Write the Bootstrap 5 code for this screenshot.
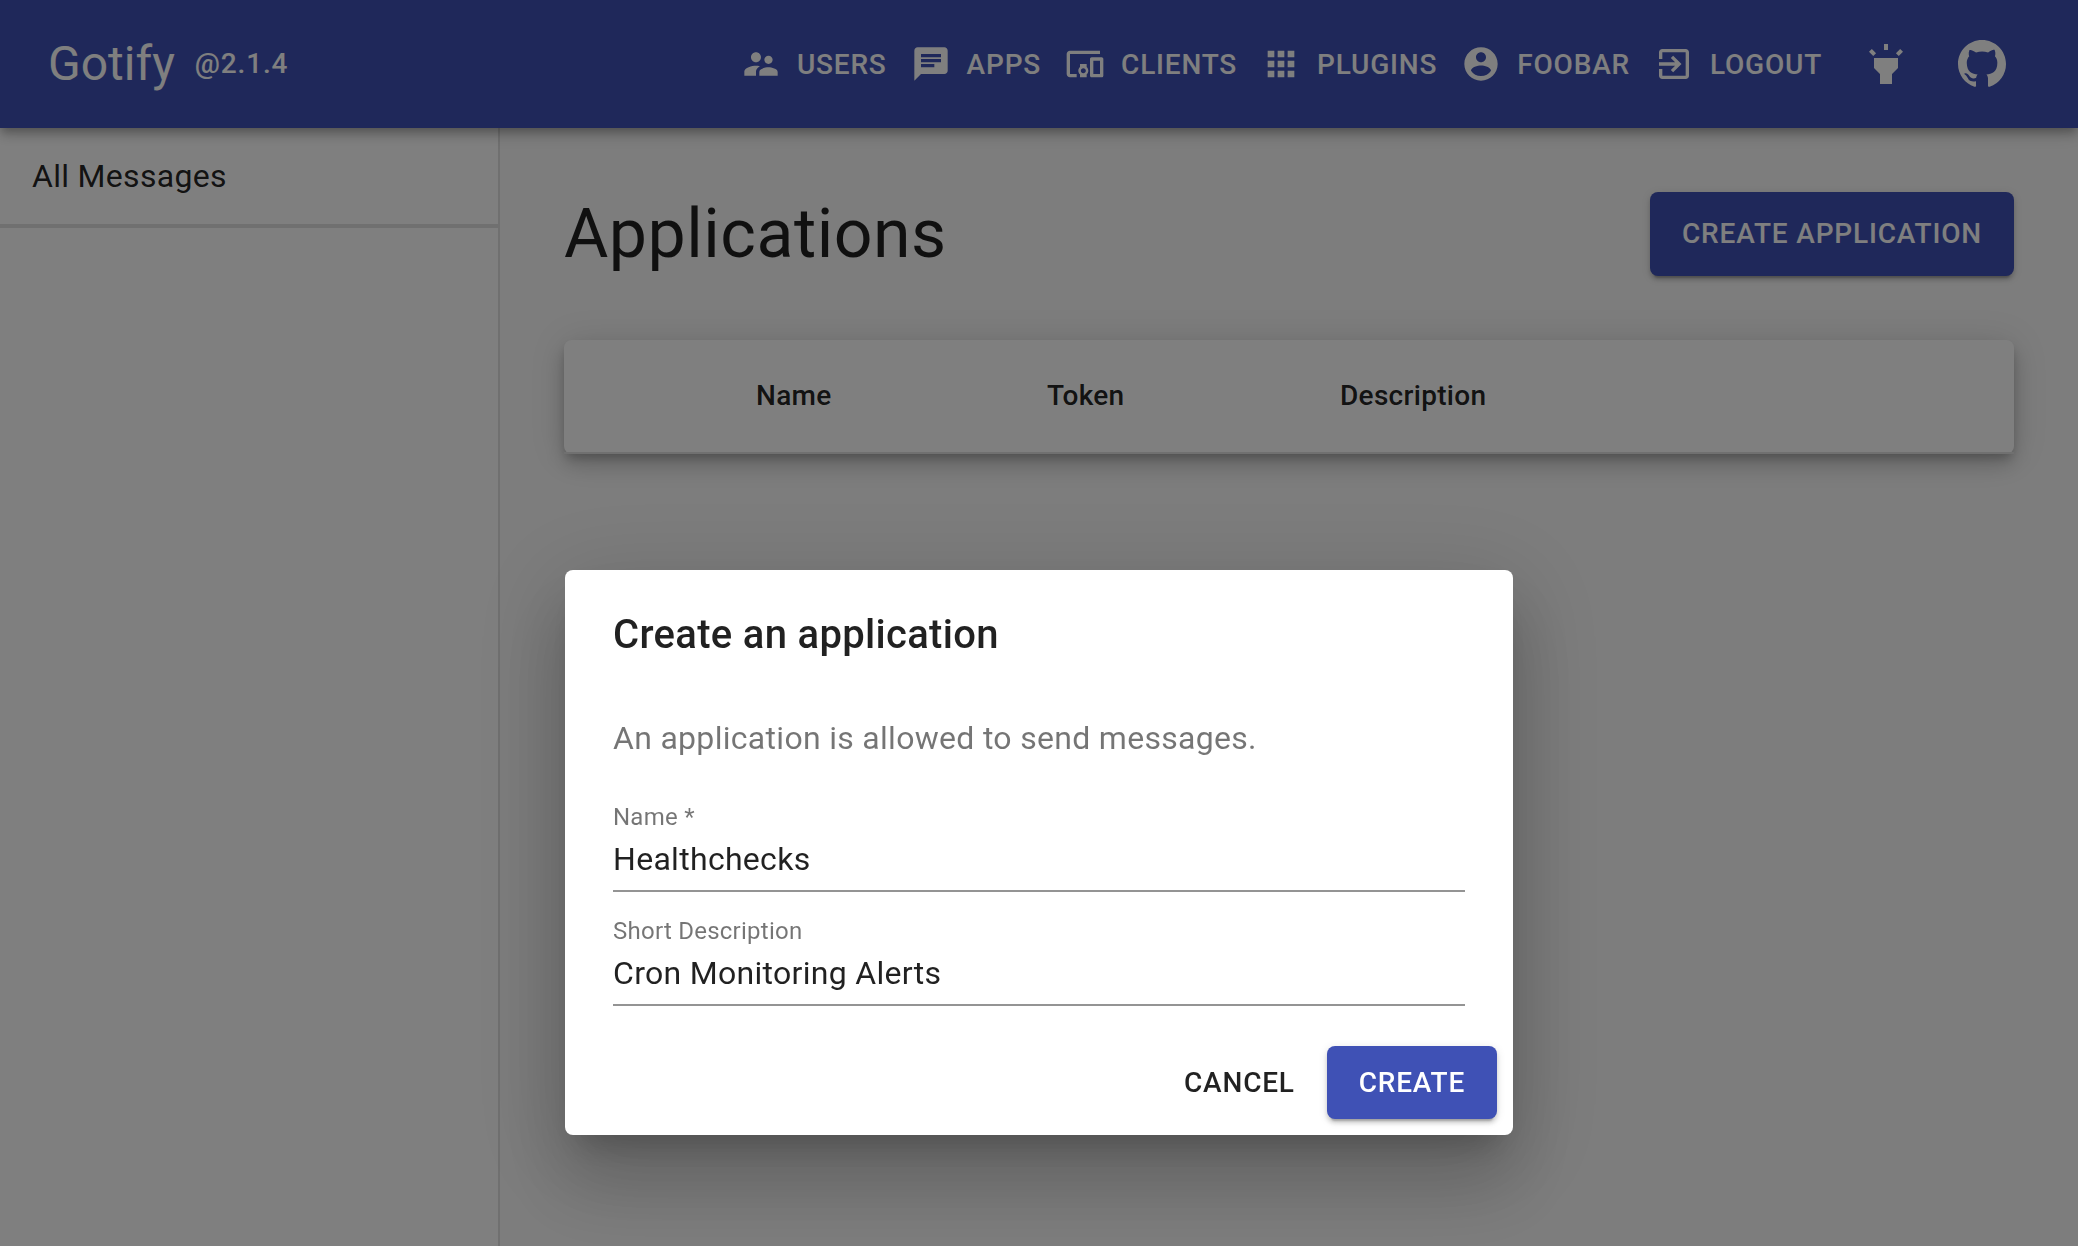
<!DOCTYPE html>
<html lang="en">
<head>
<meta charset="utf-8">
<meta name="viewport" content="width=device-width, initial-scale=1">
<title>Gotify</title>
<link href="https://cdn.jsdelivr.net/npm/bootstrap@5.3.0/dist/css/bootstrap.min.css" rel="stylesheet">
<style>
  body { font-family: Roboto, "Liberation Sans", sans-serif; font-size: 32px; line-height: 48px; color: rgba(0,0,0,.87); background: #fafafa; height: 100vh; overflow: hidden; }
  .app-bar { height: 128px; padding: 0 48px; background: #3f51b5; color: #fff; z-index: 1030; position: relative;
    box-shadow: 0 4px 8px -2px rgba(0,0,0,.2), 0 8px 10px 0 rgba(0,0,0,.14), 0 2px 20px 0 rgba(0,0,0,.12); }
  .app-title { font-size: 48px; line-height: 64px; }
  .app-version { font-size: 28px; font-weight: 500; letter-spacing: .85px; margin-left: 20px; }
  .mui-btn { font-size: 28px; line-height: 49px; font-weight: 500; letter-spacing: .8px; padding: 12px 16px; border: 0; border-radius: 8px; text-transform: uppercase; color: inherit; }
  .nav-btn { padding: 12px 16px 12px 8px; gap: 16px; }
  .nav-btn svg { width: 40px; height: 40px; fill: currentColor; }
  .round-btn { width: 96px; height: 96px; padding: 0; border: 0; color: #fff; }
  .round-btn svg { width: 48px; height: 48px; fill: currentColor; }
  .btn-filled, .btn-filled:hover { padding-left: 32px; padding-right: 32px; background: #3f51b5; color: #fff;
    box-shadow: 0 6px 2px -4px rgba(0,0,0,.2), 0 4px 4px 0 rgba(0,0,0,.14), 0 2px 10px 0 rgba(0,0,0,.12); }
  .btn-tall { height: 84px; padding-top: 17px; padding-bottom: 18px; letter-spacing: .83px; }
  .side-bar { width: 500px; background: #fff; border-right: 2px solid #e0e0e0; }
  .side-item { height: 100px; padding: 24px 32px; border-bottom: 4px solid #e0e0e0; letter-spacing: .3px; }
  .content-pane { padding: 64px 64px 0 64px; }
  .page-title { font-size: 68px; line-height: 84px; font-weight: 400; letter-spacing: .5px; }
  .paper { background: #fff; border-radius: 8px; height: 114px; margin-top: 64px; overflow: visible;
    box-shadow: 0 6px 10px -2px rgba(0,0,0,.2), 0 12px 20px 0 rgba(0,0,0,.14), 0 2px 36px 0 rgba(0,0,0,.12); }
  .head-table { table-layout: fixed; height: 114px; border-collapse: separate; border-spacing: 0; }
  .head-table th { font-size: 28px; line-height: 48px; font-weight: 500; letter-spacing: .3px; padding: 0 32px; border-bottom: 2px solid #e0e0e0; color: rgba(0,0,0,.87); vertical-align: middle; }
  .col-image { width: 160px; } .col-name { width: 291px; } .col-token { width: 293px; }
  .dialog-box { width: 948px; max-width: none; margin: 570px auto 0; }
  .dialog-paper { border: 0; border-radius: 8px; height: 565px; color: rgba(0,0,0,.87);
    box-shadow: 0 22px 30px -14px rgba(0,0,0,.2), 0 48px 76px 6px rgba(0,0,0,.14), 0 18px 92px 16px rgba(0,0,0,.12); }
  .dialog-head { padding: 33px 48px 23px; border: 0; }
  .dialog-head h2 { font-size: 40px; line-height: 64px; font-weight: 500; letter-spacing: .32px; }
  .dialog-main { padding: 16px 48px 0; }
  .dialog-hint { line-height: 48px; margin: 8px 0 32px; letter-spacing: .3px; color: rgba(0,0,0,.54); }
  .field-box { border-bottom: 2px solid rgba(0,0,0,.42); height: 98px; margin-bottom: 16px; padding-top: 7px; }
  .field-box + .field-box { margin-top: 16px; margin-bottom: 0; }
  .field-box label { display: block; font-size: 24px; line-height: 32px; color: rgba(0,0,0,.54); letter-spacing: .25px; height: 32px; }
  .field-box input { display: block; padding: 0; border: 0; border-radius: 0; font-size: 32px; line-height: 38px; height: 38px; margin-top: 7px; color: inherit; letter-spacing: .3px; background: none; }
  .dialog-foot { padding: 0 16px 16px; border: 0; gap: 16px; }
  .dialog-foot > * { margin: 0; }
</style>
</head>
<body class="d-flex flex-column">
<header class="app-bar d-flex align-items-center flex-shrink-0">
  <div class="app-title">Gotify</div>
  <div class="app-version">@2.1.4</div>
  <nav class="d-flex align-items-center ms-auto">
    <a class="btn mui-btn nav-btn d-flex align-items-center"><svg viewBox="0 0 24 24"><path d="M16.5 12c1.38 0 2.49-1.12 2.49-2.5S17.88 7 16.5 7C15.12 7 14 8.12 14 9.5s1.12 2.5 2.5 2.5zM9 11c1.66 0 2.99-1.34 2.99-3S10.66 5 9 5C7.34 5 6 6.34 6 8s1.34 3 3 3zm7.5 3c-1.83 0-5.5.92-5.5 2.75V19h11v-2.25c0-1.83-3.67-2.75-5.5-2.75zM9 13c-2.33 0-7 1.17-7 3.5V19h7v-2.25c0-.85.33-2.34 2.37-3.47C10.5 13.1 9.66 13 9 13z"/></svg><span>Users</span></a>
    <a class="btn mui-btn nav-btn d-flex align-items-center"><svg viewBox="0 0 24 24"><path d="M20 2H4c-1.1 0-1.99.9-1.99 2L2 22l4-4h14c1.1 0 2-.9 2-2V4c0-1.1-.9-2-2-2zM6 9h12v2H6V9zm8 5H6v-2h8v2zm4-6H6V6h12v2z"/></svg><span>Apps</span></a>
    <a class="btn mui-btn nav-btn d-flex align-items-center"><svg viewBox="0 0 24 24"><path d="M3 6h18V4H3c-1.1 0-2 .9-2 2v12c0 1.1.9 2 2 2h4v-2H3V6zm10 6H9v1.78c-.61.55-1 1.33-1 2.22s.39 1.67 1 2.22V20h4v-1.78c.61-.55 1-1.34 1-2.22s-.39-1.67-1-2.22V12zm-2 5.5c-.83 0-1.5-.67-1.5-1.5s.67-1.5 1.5-1.5 1.5.67 1.5 1.5-.67 1.5-1.5 1.5zM22 8h-6c-.5 0-1 .5-1 1v10c0 .5.5 1 1 1h6c.5 0 1-.5 1-1V9c0-.5-.5-1-1-1zm-1 10h-4v-8h4v8z"/></svg><span>Clients</span></a>
    <a class="btn mui-btn nav-btn d-flex align-items-center"><svg viewBox="0 0 24 24"><path d="M4 8h4V4H4v4zm6 12h4v-4h-4v4zm-6 0h4v-4H4v4zm0-6h4v-4H4v4zm6 0h4v-4h-4v4zm6-10v4h4V4h-4zm-6 4h4V4h-4v4zm6 6h4v-4h-4v4zm0 6h4v-4h-4v4z"/></svg><span>Plugins</span></a>
    <a class="btn mui-btn nav-btn d-flex align-items-center"><svg viewBox="0 0 24 24"><path d="M12 2C6.48 2 2 6.48 2 12s4.48 10 10 10 10-4.48 10-10S17.52 2 12 2zm0 3c1.66 0 3 1.34 3 3s-1.34 3-3 3-3-1.34-3-3 1.34-3 3-3zm0 14.2c-2.5 0-4.71-1.28-6-3.22.03-1.99 4-3.08 6-3.08 1.99 0 5.97 1.09 6 3.08-1.29 1.94-3.5 3.22-6 3.22z"/></svg><span>Foobar</span></a>
    <a class="btn mui-btn nav-btn d-flex align-items-center"><svg viewBox="0 0 24 24"><path d="M10.09 15.59L11.5 17l5-5-5-5-1.41 1.41L12.67 11H3v2h9.67l-2.58 2.59zM19 3H5c-1.11 0-2 .9-2 2v4h2V5h14v14H5v-4H3v4c0 1.1.89 2 2 2h14c1.1 0 2-.9 2-2V5c0-1.1-.9-2-2-2z"/></svg><span>Logout</span></a>
    <a class="btn round-btn d-flex align-items-center justify-content-center"><svg viewBox="0 0 24 24"><path d="M6 14l3 3v5h6v-5l3-3V9H6zm5-12h2v3h-2zM3.5 5.875L4.914 4.46l2.12 2.122L5.62 7.997zm13.46.71l2.123-2.12 1.414 1.414L18.375 8z"/></svg></a>
    <a class="btn round-btn d-flex align-items-center justify-content-center"><svg viewBox="0 0 16 16"><path d="M8 0C3.58 0 0 3.58 0 8c0 3.54 2.29 6.53 5.47 7.59.4.07.55-.17.55-.38 0-.19-.01-.82-.01-1.49-2.01.37-2.53-.49-2.69-.94-.09-.23-.48-.94-.82-1.13-.28-.15-.68-.52-.01-.53.63-.01 1.08.58 1.23.82.72 1.21 1.87.87 2.33.66.07-.52.28-.87.51-1.07-1.78-.2-3.64-.89-3.64-3.95 0-.87.31-1.59.82-2.15-.08-.2-.36-1.02.08-2.12 0 0 .67-.21 2.2.82.64-.18 1.32-.27 2-.27s1.36.09 2 .27c1.53-1.04 2.2-.82 2.2-.82.44 1.1.16 1.92.08 2.12.51.56.82 1.27.82 2.15 0 3.07-1.87 3.75-3.65 3.95.29.25.54.73.54 1.48 0 1.07-.01 1.93-.01 2.2 0 .21.15.46.55.38A8.01 8.01 0 0 0 16 8c0-4.42-3.58-8-8-8z"/></svg></a>
  </nav>
</header>
<div class="d-flex flex-grow-1">
  <aside class="side-bar flex-shrink-0"><div class="side-item">All Messages</div></aside>
  <main class="content-pane flex-grow-1">
    <div class="d-flex justify-content-between align-items-center">
      <h1 class="page-title mb-0">Applications</h1>
      <button class="btn mui-btn btn-filled btn-tall">Create Application</button>
    </div>
    <div class="paper">
      <table class="head-table w-100">
        <thead><tr><th class="col-image"></th><th class="col-name">Name</th><th class="col-token">Token</th><th>Description</th></tr></thead>
      </table>
    </div>
  </main>
</div>
<div class="modal-backdrop show"></div>
<div class="modal d-block overflow-hidden" tabindex="-1" role="dialog">
  <div class="modal-dialog dialog-box">
    <div class="modal-content dialog-paper">
      <div class="modal-header dialog-head"><h2 class="mb-0">Create an application</h2></div>
      <div class="modal-body dialog-main">
        <p class="dialog-hint">An application is allowed to send messages.</p>
        <div class="field-box"><label for="app-name">Name *</label><input id="app-name" class="w-100" value="Healthchecks"></div>
        <div class="field-box"><label for="app-desc">Short Description</label><input id="app-desc" class="w-100" value="Cron Monitoring Alerts"></div>
      </div>
      <div class="modal-footer dialog-foot">
        <button class="btn mui-btn">Cancel</button>
        <button class="btn mui-btn btn-filled">Create</button>
      </div>
    </div>
  </div>
</div>
<script src="https://cdn.jsdelivr.net/npm/bootstrap@5.3.0/dist/js/bootstrap.bundle.min.js"></script>
</body>
</html>
